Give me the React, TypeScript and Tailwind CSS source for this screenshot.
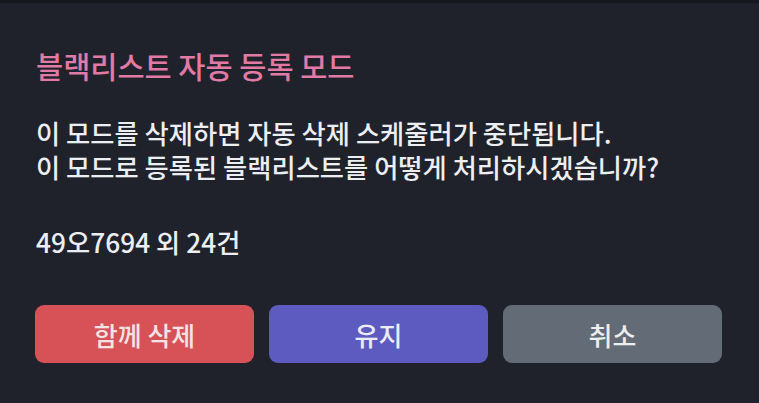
export default function App() {
  const font = { fontFamily: '"Noto Sans CJK KR", "Noto Sans", sans-serif' };
  return (
    <div className="w-[759px] h-[403px] bg-[#1f222b] border-t-[3px] border-[#15171c] overflow-hidden" style={font}>
      <div className="px-[36px] pt-[45px]">
        <h1 className="text-[29.5px] leading-[34px] text-[#e17aa5] font-medium whitespace-nowrap">블랙리스트 자동 등록 모드</h1>
        <div className="mt-[34px] text-[26.3px] leading-[34px] text-[#eceef2] font-medium whitespace-nowrap">
          <p>이 모드를 삭제하면 자동 삭제 스케줄러가 중단됩니다.</p>
          <p>이 모드로 등록된 블랙리스트를 어떻게 처리하시겠습니까?</p>
        </div>
        <p className="mt-[41px] text-[26.3px] leading-[34px] text-[#eceef2] font-medium whitespace-nowrap">49오7694 외 24건</p>
        <div className="mt-[46px] -ml-[1px] grid grid-cols-3 gap-[15px] w-[687px]">
          <button className="h-[58px] rounded-[9px] bg-[#d65257] text-[#f2e4e6] text-[26px] font-medium">함께 삭제</button>
          <button className="h-[58px] rounded-[9px] bg-[#5d5bbf] text-[#ecebf8] text-[26px] font-medium">유지</button>
          <button className="h-[58px] rounded-[9px] bg-[#636b76] text-[#eceef0] text-[26px] font-medium">취소</button>
        </div>
      </div>
    </div>
  );
}
